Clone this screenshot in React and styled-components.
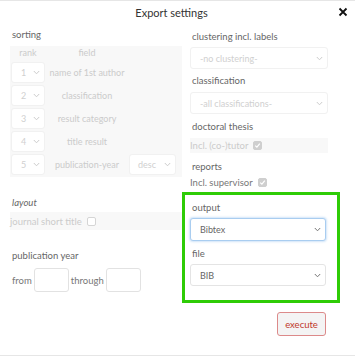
import React from "react";
import styled, { createGlobalStyle } from "styled-components";

const Global = createGlobalStyle`
  html, body { margin: 0; padding: 0; background: #fff; }
  body { font-family: "Lato", "Noto Sans", sans-serif; }
`;

const Dialog = styled.div`
  width: 355px;
  height: 356px;
  box-sizing: border-box;
  border-top: 1px solid #e6e6e6;
  border-bottom: 1px solid #e6e6e6;
  display: flex;
  flex-direction: column;
`;

const Header = styled.div`
  height: 23px;
  display: flex;
  align-items: center;
  justify-content: center;
  padding-right: 12px;
  position: relative;
  font-size: 11px;
  color: #333;
`;

const Close = styled.button`
  position: absolute;
  right: 5px;
  top: 4px;
  width: 14px;
  height: 14px;
  padding: 0;
  border: 0;
  background: none;
  display: flex;
  align-items: center;
  justify-content: center;
`;

const Body = styled.div`
  display: flex;
  padding: 4px 0 0 10px;
`;

const LeftCol = styled.div`
  width: 172px;
  display: flex;
  flex-direction: column;
`;

const RightCol = styled.div`
  margin-left: 8px;
  width: 138px;
  display: flex;
  flex-direction: column;
`;

const Label = styled.div`
  font-size: 9.5px;
  color: #666;
  padding-left: 2px;
  height: 14px;
  line-height: 14px;
  margin-top: ${(p) => p.$mt || 0}px;
  font-style: ${(p) => (p.$italic ? "italic" : "normal")};
`;

const SortTable = styled.div`
  margin-top: 4px;
  background: #f8f8f8;
  padding: 0 5px 2px 1px;
  display: grid;
  grid-template-columns: 34px 80px 47px;
  column-gap: 2px;
  row-gap: 2px;
  grid-auto-rows: 21px;
  grid-template-rows: 14px;
`;

const HeadCell = styled.div`
  font-size: 9px;
  color: #cbcbcb;
  text-align: center;
  line-height: 14px;
`;

const FieldCell = styled.div`
  font-size: 9px;
  color: #cbcbcb;
  text-align: center;
  line-height: 21px;
  white-space: nowrap;
`;

const SelectBox = styled.div`
  box-sizing: border-box;
  margin-top: ${(p) => p.$mt || 0}px;
  height: ${(p) => p.$h || 21}px;
  background: #fff;
  border: 1px solid ${(p) => (p.$focus ? "#a9cdf0" : p.$active ? "#e4e4e4" : "#f1f1f1")};
  box-shadow: ${(p) => (p.$focus ? "0 0 2px 1px rgba(150,195,240,0.45)" : "none")};
  border-radius: 3px;
  display: flex;
  align-items: center;
  justify-content: space-between;
  padding: 0 4px 0 ${(p) => p.$pl || 9}px;
  font-size: 9px;
  color: ${(p) => (p.$active ? "#666" : "#d0d0d0")};
`;

const Chevron = ({ color = "#ccc" }) => (
  <svg width="7" height="5" viewBox="0 0 7 5">
    <polyline points="0.8,1 3.5,3.8 6.2,1" fill="none" stroke={color} strokeWidth="1" />
  </svg>
);

const Select = ({ value, active, focus, pl, h, mt }) => (
  <SelectBox $active={active} $focus={focus} $pl={pl} $h={h} $mt={mt}>
    <span>{value}</span>
    <Chevron color={active ? "#777" : "#ccc"} />
  </SelectBox>
);

const CheckRow = styled.div`
  margin-top: ${(p) => p.$mt || 0}px;
  height: ${(p) => p.$h || 17}px;
  background: ${(p) => (p.$bg ? "#f8f8f8" : "transparent")};
  display: flex;
  align-items: center;
  gap: 3px;
  font-size: 9.5px;
  color: ${(p) => p.$color || "#cbcbcb"};
  white-space: nowrap;
`;

const Check = styled.span`
  display: inline-block;
  box-sizing: border-box;
  width: 9px;
  height: 9px;
  border-radius: 2px;
  border: 1px solid ${(p) => (p.$checked ? "#cfcfcf" : "#d5d5d5")};
  background: ${(p) => (p.$checked ? "#cfcfcf" : "#fff")};
  position: relative;
  margin-left: 2px;
`;

const Tick = () => (
  <svg width="7" height="7" viewBox="0 0 7 7" style={{ position: "absolute", left: 0, top: 0 }}>
    <polyline points="1.2,3.6 2.9,5.2 5.8,1.6" fill="none" stroke="#fff" strokeWidth="1.2" />
  </svg>
);

const YearRow = styled.div`
  margin-top: 5px;
  display: flex;
  align-items: center;
  gap: 2px;
  font-size: 9.5px;
  color: #777;
  padding-left: 2px;
`;

const YearInput = styled.div`
  box-sizing: border-box;
  width: 35px;
  height: 24px;
  border: 1px solid #e2e2e2;
  border-radius: 3px;
  background: #fff;
`;

const GreenBox = styled.div`
  margin: 1px 0 0 -8px;
  width: 158px;
  box-sizing: border-box;
  border: 3px solid #2ecc06;
  padding: 3px 11px 14px 5px;
  display: flex;
  flex-direction: column;
`;

const Footer = styled.div`
  display: flex;
  justify-content: flex-end;
  padding: 9px 29px 0 0;
`;

const Execute = styled.button`
  width: 49px;
  height: 24px;
  box-sizing: border-box;
  border: 1px solid #dc8a8a;
  border-radius: 3px;
  background: #f4f4f4;
  color: #c0392b;
  font-family: inherit;
  font-size: 9.5px;
  padding: 0;
`;

const rows = [
  ["1", "name of 1st author"],
  ["2", "classification"],
  ["3", "result category"],
  ["4", "title result"],
  ["5", "publication-year"],
];

export default function App() {
  return (
    <>
      <Global />
      <Dialog>
        <Header>
          Export settings
          <Close aria-label="close">
            <svg width="10" height="10" viewBox="0 0 10 10">
              <path d="M1.5 1.5 L8.5 8.5 M8.5 1.5 L1.5 8.5" stroke="#111" strokeWidth="1.8" />
            </svg>
          </Close>
        </Header>
        <Body>
          <LeftCol>
            <Label>sorting</Label>
            <SortTable>
              <HeadCell>rank</HeadCell>
              <HeadCell>field</HeadCell>
              <HeadCell />
              {rows.map(([n, f], i) => (
                <React.Fragment key={n}>
                  <Select value={n} />
                  <FieldCell>{f}</FieldCell>
                  {i === 4 ? <Select value="desc" pl={8} /> : <div />}
                </React.Fragment>
              ))}
            </SortTable>
            <Label $italic $mt={19}>layout</Label>
            <CheckRow $bg $mt={2} $h={18}>
              journal short title <Check />
            </CheckRow>
            <Label $mt={19}>publication year</Label>
            <YearRow>
              from <YearInput /> through <YearInput />
            </YearRow>
          </LeftCol>
          <RightCol>
            <Label $mt={2}>clustering incl. labels</Label>
            <Select value="-no clustering-" h={22} mt={3} />
            <Label $mt={5}>classification</Label>
            <Select value="-all classifications-" h={22} mt={4} />
            <Label $mt={6}>doctoral thesis</Label>
            <CheckRow $bg $mt={4} $h={15}>
              Incl. (co-)tutor <Check $checked><Tick /></Check>
            </CheckRow>
            <Label $mt={7}>reports</Label>
            <CheckRow $mt={0} $h={17} $color="#777">
              Incl. supervisor <Check $checked><Tick /></Check>
            </CheckRow>
            <GreenBox>
              <Label $mt={3}>output</Label>
              <Select value="Bibtex" active focus h={23} mt={3} />
              <Label $mt={6}>file</Label>
              <Select value="BIB" active h={22} mt={3} />
            </GreenBox>
          </RightCol>
        </Body>
        <Footer>
          <Execute>execute</Execute>
        </Footer>
      </Dialog>
    </>
  );
}
